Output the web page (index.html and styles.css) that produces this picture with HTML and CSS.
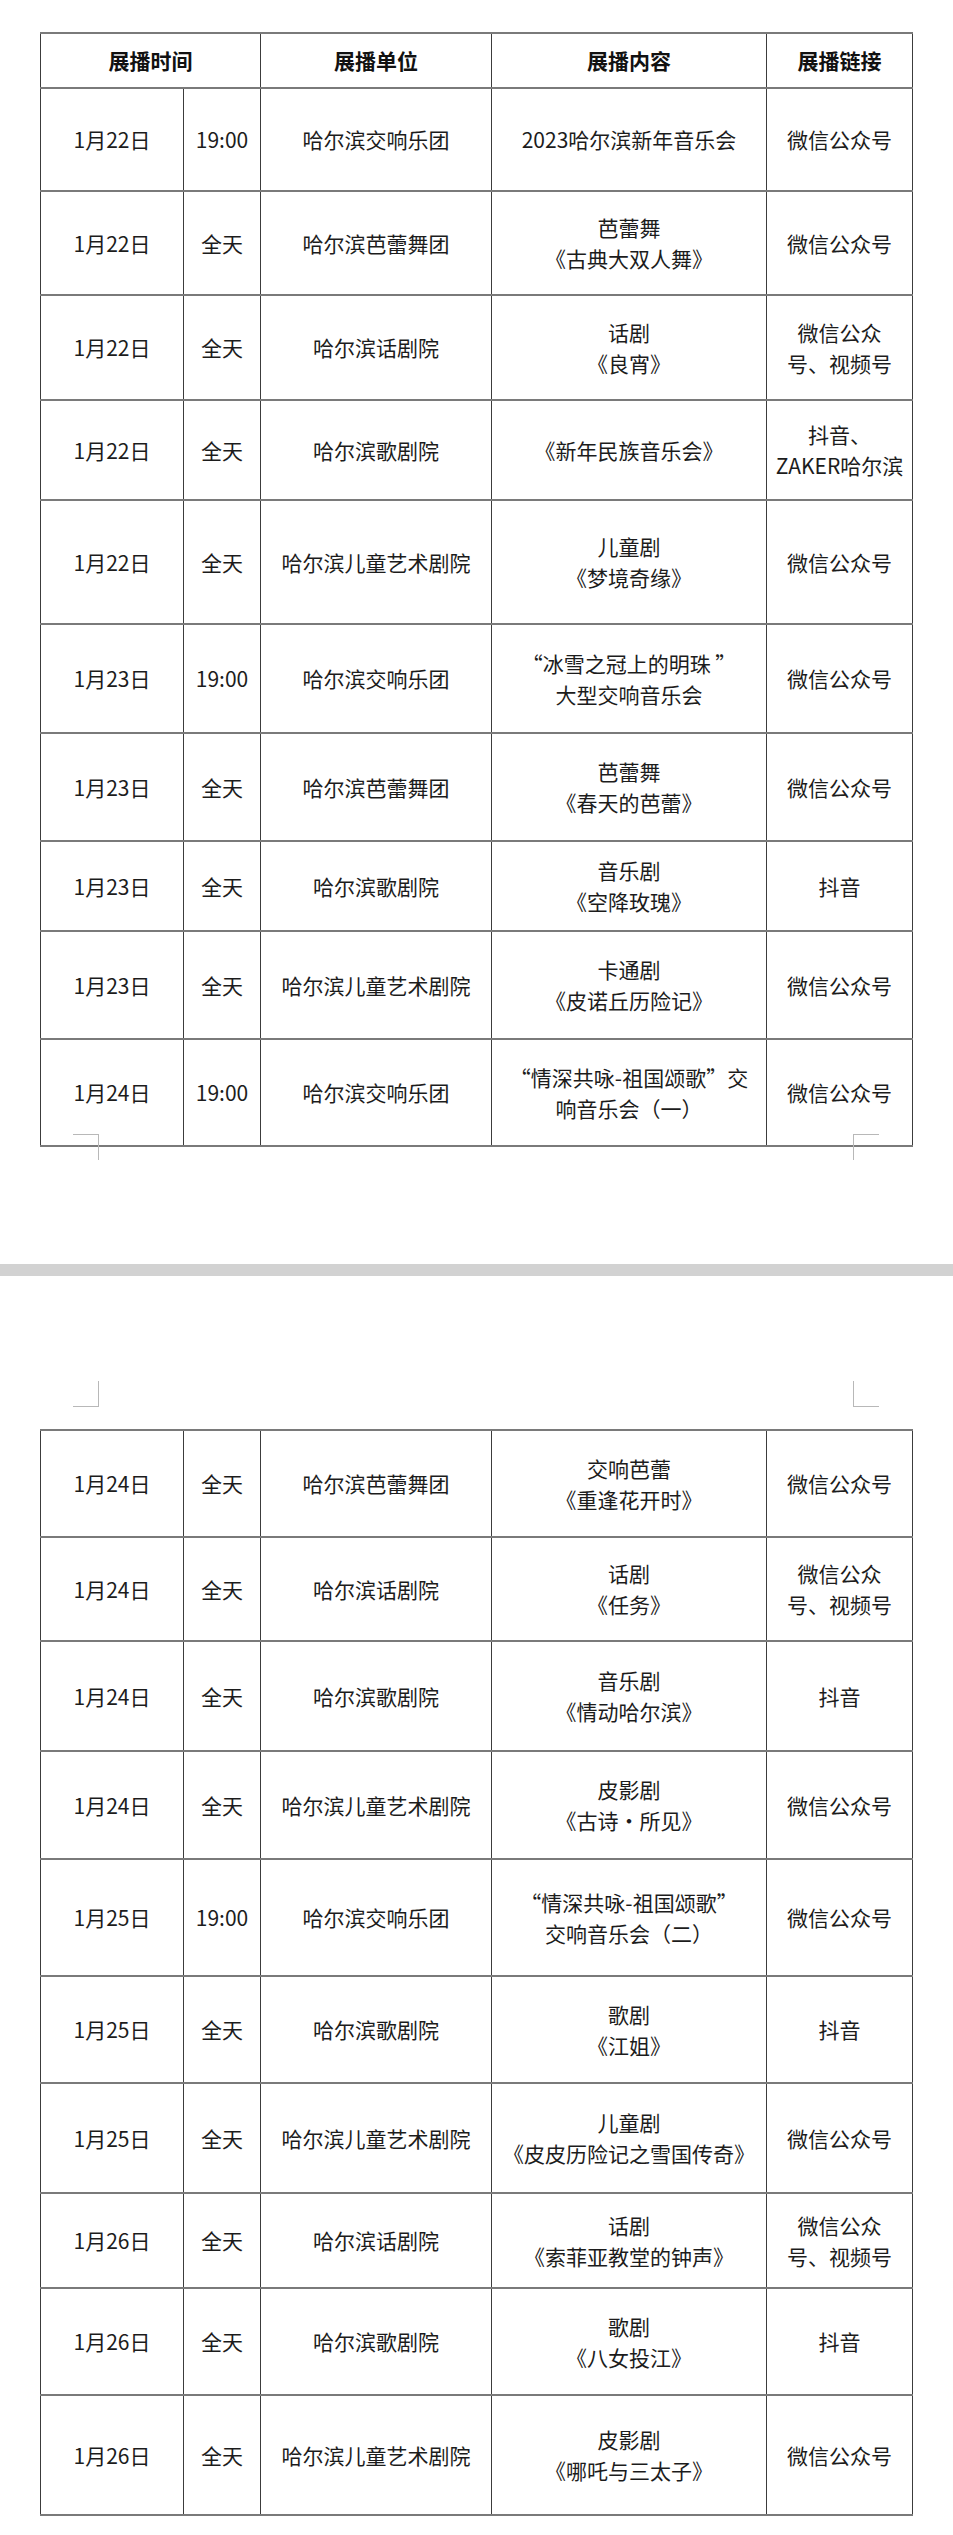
FILE: index.html
```html
<!DOCTYPE html>
<html lang="zh-CN">
<head>
<meta charset="utf-8">
<title>展播安排</title>
<link rel="stylesheet" href="styles.css">
</head>
<body>
<div class="page page-one">
  <table class="sched sched-one">
    <colgroup><col class="c-date"><col class="c-time"><col class="c-unit"><col class="c-content"><col class="c-link"></colgroup>
    <tr class="head"><th colspan="2">展播时间</th><th>展播单位</th><th>展播内容</th><th>展播链接</th></tr>
    <tr><td>1月22日</td><td>19:00</td><td>哈尔滨交响乐团</td><td>2023哈尔滨新年音乐会</td><td>微信公众号</td></tr>
    <tr><td>1月22日</td><td>全天</td><td>哈尔滨芭蕾舞团</td><td>芭蕾舞<br>《古典大双人舞》</td><td>微信公众号</td></tr>
    <tr><td>1月22日</td><td>全天</td><td>哈尔滨话剧院</td><td>话剧<br>《良宵》</td><td>微信公众<br>号、视频号</td></tr>
    <tr><td>1月22日</td><td>全天</td><td>哈尔滨歌剧院</td><td>《新年民族音乐会》</td><td>抖音、<br>ZAKER哈尔滨</td></tr>
    <tr><td>1月22日</td><td>全天</td><td>哈尔滨儿童艺术剧院</td><td>儿童剧<br>《梦境奇缘》</td><td>微信公众号</td></tr>
    <tr><td>1月23日</td><td>19:00</td><td>哈尔滨交响乐团</td><td>“冰雪之冠上的明珠 ”<br>大型交响音乐会</td><td>微信公众号</td></tr>
    <tr><td>1月23日</td><td>全天</td><td>哈尔滨芭蕾舞团</td><td>芭蕾舞<br>《春天的芭蕾》</td><td>微信公众号</td></tr>
    <tr><td>1月23日</td><td>全天</td><td>哈尔滨歌剧院</td><td>音乐剧<br>《空降玫瑰》</td><td>抖音</td></tr>
    <tr><td>1月23日</td><td>全天</td><td>哈尔滨儿童艺术剧院</td><td>卡通剧<br>《皮诺丘历险记》</td><td>微信公众号</td></tr>
    <tr><td>1月24日</td><td>19:00</td><td>哈尔滨交响乐团</td><td>“情深共咏-祖国颂歌”交<br>响音乐会（一）</td><td>微信公众号</td></tr>
  </table>
  <div class="mark mark-bl"></div>
  <div class="mark mark-br"></div>
</div>
<div class="sep"></div>
<div class="page page-two">
  <div class="mark mark-tl"></div>
  <div class="mark mark-tr"></div>
  <table class="sched sched-two">
    <colgroup><col class="c-date"><col class="c-time"><col class="c-unit"><col class="c-content"><col class="c-link"></colgroup>
    <tr><td>1月24日</td><td>全天</td><td>哈尔滨芭蕾舞团</td><td>交响芭蕾<br>《重逢花开时》</td><td>微信公众号</td></tr>
    <tr><td>1月24日</td><td>全天</td><td>哈尔滨话剧院</td><td>话剧<br>《任务》</td><td>微信公众<br>号、视频号</td></tr>
    <tr><td>1月24日</td><td>全天</td><td>哈尔滨歌剧院</td><td>音乐剧<br>《情动哈尔滨》</td><td>抖音</td></tr>
    <tr><td>1月24日</td><td>全天</td><td>哈尔滨儿童艺术剧院</td><td>皮影剧<br>《古诗·所见》</td><td>微信公众号</td></tr>
    <tr><td>1月25日</td><td>19:00</td><td>哈尔滨交响乐团</td><td>“情深共咏-祖国颂歌”<br>交响音乐会（二）</td><td>微信公众号</td></tr>
    <tr><td>1月25日</td><td>全天</td><td>哈尔滨歌剧院</td><td>歌剧<br>《江姐》</td><td>抖音</td></tr>
    <tr><td>1月25日</td><td>全天</td><td>哈尔滨儿童艺术剧院</td><td>儿童剧<br>《皮皮历险记之雪国传奇》</td><td>微信公众号</td></tr>
    <tr><td>1月26日</td><td>全天</td><td>哈尔滨话剧院</td><td>话剧<br>《索菲亚教堂的钟声》</td><td>微信公众<br>号、视频号</td></tr>
    <tr><td>1月26日</td><td>全天</td><td>哈尔滨歌剧院</td><td>歌剧<br>《八女投江》</td><td>抖音</td></tr>
    <tr><td>1月26日</td><td>全天</td><td>哈尔滨儿童艺术剧院</td><td>皮影剧<br>《哪吒与三太子》</td><td>微信公众号</td></tr>
  </table>
</div>
</body>
</html>
```
FILE: styles.css
```css
html, body {
  margin: 0;
  padding: 0;
  background: #ffffff;
}
body {
  font-family: "Noto Sans CJK SC", "Noto Sans", sans-serif;
  color: #1c1c1c;
  width: 953px;
}
.page {
  position: relative;
  box-sizing: border-box;
}
.page-one {
  height: 1264px;
  padding: 32px 0 0 40px;
}
.page-two {
  height: 1259px;
  padding: 153px 0 0 40px;
}
.sep {
  height: 12px;
  background: #d2d2d2;
}
.sched {
  border-collapse: collapse;
  table-layout: fixed;
  width: 872px;
}
.c-date { width: 143px; }
.c-time { width: 77px; }
.c-unit { width: 231px; }
.c-content { width: 275px; }
.c-link { width: 146px; }
.sched th,
.sched td {
  border-left: 1px solid #3c3c3c;
  border-right: 1px solid #3c3c3c;
  border-top: 2px solid #7a7a7a;
  border-bottom: 2px solid #7a7a7a;
  text-align: center;
  vertical-align: middle;
  padding: 0 4px;
  font-size: 21px;
  line-height: 31px;
  font-weight: 400;
  white-space: nowrap;
}
.sched th {
  font-weight: 700;
  color: #111;
}
.sched-one tr:nth-child(1) { height: 55px; }
.sched-one tr:nth-child(2) { height: 103px; }
.sched-one tr:nth-child(3) { height: 104px; }
.sched-one tr:nth-child(4) { height: 105px; }
.sched-one tr:nth-child(5) { height: 100px; }
.sched-one tr:nth-child(6) { height: 124px; }
.sched-one tr:nth-child(7) { height: 109px; }
.sched-one tr:nth-child(8) { height: 108px; }
.sched-one tr:nth-child(9) { height: 90px; }
.sched-one tr:nth-child(10) { height: 108px; }
.sched-one tr:nth-child(11) { height: 107px; }

.sched-two tr:nth-child(1) { height: 107px; }
.sched-two tr:nth-child(2) { height: 104px; }
.sched-two tr:nth-child(3) { height: 110px; }
.sched-two tr:nth-child(4) { height: 108px; }
.sched-two tr:nth-child(5) { height: 117px; }
.sched-two tr:nth-child(6) { height: 107px; }
.sched-two tr:nth-child(7) { height: 110px; }
.sched-two tr:nth-child(8) { height: 95px; }
.sched-two tr:nth-child(9) { height: 107px; }
.sched-two tr:nth-child(10) { height: 120px; }

.mark {
  position: absolute;
  width: 25px;
  height: 25px;
  border: 0 solid #b8b8b8;
}
.mark-bl {
  left: 73px;
  top: 1134px;
  border-top-width: 1px;
  border-right-width: 1px;
}
.mark-br {
  left: 853px;
  top: 1134px;
  border-top-width: 1px;
  border-left-width: 1px;
}
.mark-tl {
  left: 73px;
  top: 105px;
  border-bottom-width: 1px;
  border-right-width: 1px;
}
.mark-tr {
  left: 853px;
  top: 105px;
  border-bottom-width: 1px;
  border-left-width: 1px;
}
```
